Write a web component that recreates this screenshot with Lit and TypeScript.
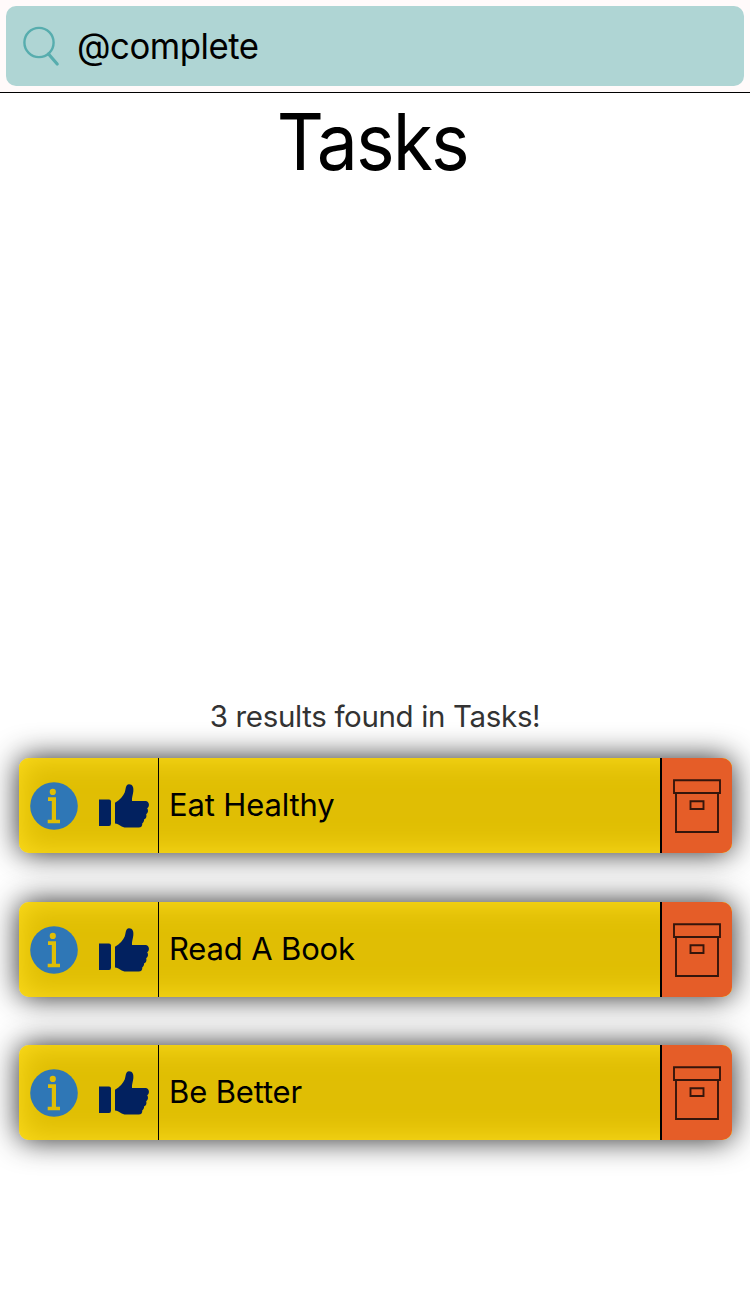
import { LitElement, html, css } from 'lit';
import { customElement, property } from 'lit/decorators.js';

@customElement('task-row')
class TaskRow extends LitElement {
  @property() name = '';
  static styles = css`
    :host { display: block; height: 95px; border-radius: 10px; box-shadow: 0 0 30px rgba(0, 0, 0, 0.85); }
    .row { display: flex; height: 95px; border-radius: 10px; overflow: hidden; background: #e0be04; box-shadow: inset 0 0 30px #ffdf20; }
    .actions { box-sizing: border-box; width: 140px; display: flex; align-items: center; padding-left: 10px; border-right: 1px solid #000; }
    .info { width: 50px; height: 50px; }
    .thumb { width: 52px; height: 48px; margin-left: 20px; }
    .name { flex: 1; display: flex; align-items: center; padding: 0 0 2px 10px; color: #000; white-space: pre; }
    .archive { box-sizing: border-box; width: 72px; border-left: 2px solid #000; background: #e55d28; display: flex; align-items: center; justify-content: center; }
    .box { width: 48px; height: 54px; }
    svg { display: block; }
  `;
  render() {
    return html`<div class="row">
      <div class="actions">
        <svg class="info" viewBox="0 0 50 50">
          <circle cx="25" cy="25" r="23.8" fill="#2f77b6"/>
          <g fill="#e0be05"><circle cx="23.8" cy="10.9" r="3.1"/><path d="M19 16.3H27V38.7H31V42.3H18.7V38.7H22.8V20H19Z"/></g>
        </svg>
        <svg class="thumb" viewBox="0 0 52 48" fill="#02215f">
          <path d="M0 17.5H10Q12 17.5 12 19.5V41.5Q12 44 10 44H0Z"/>
          <path d="M16 20.7C21 18.3 24 14 25.7 10.5C26.8 8.2 26.3 2.2 30 2.2C33.8 2.2 34.8 5.8 34.3 9.5C33.9 13 32.6 16 33 19H46.5C50.5 19 51 24.8 48.2 26.2C49.6 28 49.2 31 47.2 32.3C48 34.5 47 36.8 45 37.6C45.3 39 44.3 41 43.3 41.3C43.5 44 42.3 45.6 39.7 45.6H27C22.8 45.6 20.2 41.9 16 41.5Z"/>
        </svg>
      </div>
      <div class="name">${this.name}</div>
      <div class="archive">
        <svg class="box" viewBox="0 0 48 54" fill="none" stroke="#35150b" stroke-width="1.9">
          <path d="M1 1.3H47V14H1ZM3 14V53H45V14M17.5 22.3H30.5V30H17.5Z"/>
        </svg>
      </div>
    </div>`;
  }
}

@customElement('app-root')
class AppRoot extends LitElement {
  static styles = css`
    :host { display: block; height: 1294px; overflow: hidden; background: #fff; color: #000; font-family: Inter, "Liberation Sans", sans-serif; }
    .bar { box-sizing: border-box; height: 93px; padding: 6px; background: #fffafa; border-bottom: 1px solid #000; }
    .search { height: 80px; border-radius: 10px; background: #afd5d4; display: flex; align-items: center; padding-left: 16px; }
    .glass { width: 40px; height: 42px; margin-right: 15px; }
    .query { font-size: 36px; line-height: 44px; letter-spacing: -0.5px; transform: scaleX(0.965); transform-origin: left; }
    h1 { margin: 0; height: 100px; line-height: 98px; padding-right: 6px; font-size: 78px; font-weight: 400; letter-spacing: -2px; text-align: center; transform: scaleX(0.938); }
    .summary { margin-top: 505px; height: 37px; line-height: 36px; font-size: 29.5px; letter-spacing: -0.35px; color: #333; text-align: center; }
    .list { display: flex; flex-direction: column; gap: 48px; margin: 23px 18px 0 19px; font-size: 31px; letter-spacing: -0.15px; }
    task-row:first-child { margin-bottom: 1px; }
  `;
  render() {
    return html`
      <div class="bar"><div class="search">
        <svg class="glass" viewBox="0 0 40 42" fill="none" stroke="#57adae" stroke-linecap="round">
          <circle cx="17" cy="17.5" r="14.6" stroke-width="2.4"/><path d="M26.5 29L35.2 39" stroke-width="3.2"/>
        </svg>
        <span class="query">@complete</span>
      </div></div>
      <h1>Tasks</h1>
      <div class="summary">3 results found in Tasks!</div>
      <div class="list">${['Eat Healthy', 'Read A Book', 'Be Better'].map(n => html`<task-row .name=${n}></task-row>`)}</div>`;
  }
}
